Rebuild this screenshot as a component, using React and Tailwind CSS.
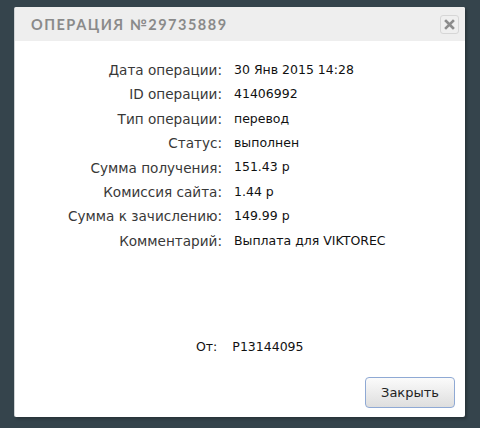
export default function App() {
  const rows = [
    ["Дата операции:", "30 Янв 2015 14:28"],
    ["ID операции:", "41406992"],
    ["Тип операции:", "перевод"],
    ["Статус:", "выполнен"],
    ["Сумма получения:", "151.43 р"],
    ["Комиссия сайта:", "1.44 р"],
    ["Сумма к зачислению:", "149.99 р"],
    ["Комментарий:", "Выплата для VIKTOREC"],
  ];
  return (
    <div className="w-[480px] h-[428px] bg-[#35444c] pt-[7px] pl-[14px] overflow-hidden">
      <div className="w-[451px] h-[410px] bg-white rounded-[2px] border-l border-[#cfd3d5] flex flex-col shadow-[2px_2px_3px_rgba(0,0,0,0.25)]">
        <div className="h-[34px] bg-[#eeeeee] rounded-t-[2px] flex items-center justify-between pl-[16px] pr-[6px]">
          <span className="font-['Lato',sans-serif] font-bold text-[14.5px] tracking-[1.5px] text-[#8a8a8a] pt-[1px]">
            ОПЕРАЦИЯ №29735889
          </span>
          <button className="w-[19px] h-[19px] rounded-[3px] border border-[#d6d6d6] bg-[#efefef] flex items-center justify-center">
            <svg width="11" height="11" viewBox="0 0 11 11">
              <path d="M2 2 L9 9 M9 2 L2 9" stroke="#8c8c8c" strokeWidth="2.6" strokeLinecap="square" />
            </svg>
          </button>
        </div>
        <div className="flex-1 flex flex-col">
          <div className="pt-[17px] flex flex-col">
            {rows.map(([k, v]) => (
              <div key={k} className="flex items-center h-[24.4px]">
                <div className="w-[207px] text-right font-['DejaVu_Sans',sans-serif] text-[13.6px] text-[#383838]">
                  {k}
                </div>
                <div className="pl-[12px] font-['DejaVu_Sans',sans-serif] text-[12.5px] text-[#111]">
                  {v}
                </div>
              </div>
            ))}
          </div>
          <div className="mt-[85px] flex items-center font-['DejaVu_Sans',sans-serif] text-[12.5px] text-[#111]">
            <span className="ml-[181px]">От:</span>
            <span className="ml-[15px]">P13144095</span>
          </div>
          <div className="mt-auto flex justify-end pr-[10px] pb-[9px]">
            <button className="w-[90px] h-[31px] rounded-[4px] border border-[#8fa9d4] bg-gradient-to-b from-[#fbfbfb] to-[#dedede] font-['DejaVu_Sans',sans-serif] text-[13px] text-[#222]">
              Закрыть
            </button>
          </div>
        </div>
      </div>
    </div>
  );
}
